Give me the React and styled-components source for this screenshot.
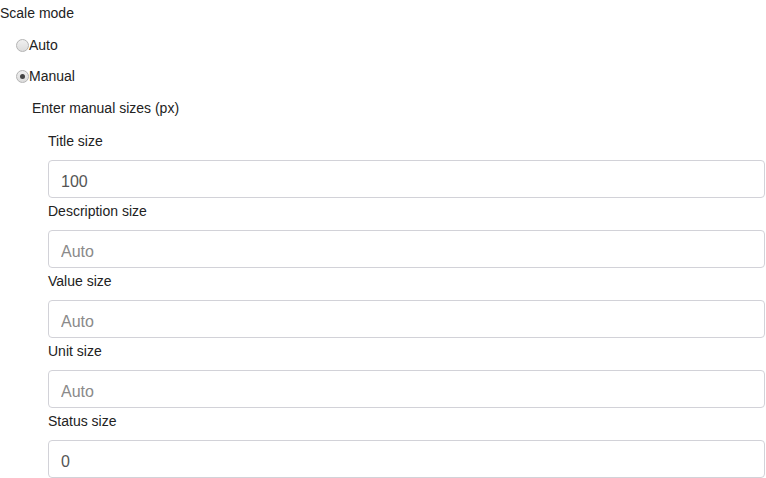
import styled, { createGlobalStyle } from "styled-components"

const fields = [
  { label: "Title size", value: "100" },
  { label: "Description size", value: "" },
  { label: "Value size", value: "" },
  { label: "Unit size", value: "" },
  { label: "Status size", value: "0" },
]

function App() {
  return (
    <>
      <GlobalStyle />
      <Page>
        <Heading>Scale mode</Heading>
        <RadioRow>
          <RadioDot />
          Auto
        </RadioRow>
        <RadioRow>
          <RadioDot checked />
          Manual
        </RadioRow>
        <SubHeading>Enter manual sizes (px)</SubHeading>
        <Fields>
          {fields.map((f) => (
            <Field key={f.label}>
              <Label>{f.label}</Label>
              <Input defaultValue={f.value} placeholder="Auto" />
            </Field>
          ))}
        </Fields>
      </Page>
    </>
  )
}

const GlobalStyle = createGlobalStyle`
  body {
    margin: 0;
    background: #fff;
    font-family: "Liberation Sans", Arial, sans-serif;
    color: #222;
  }
`

const Page = styled.div`
  display: flex;
  flex-direction: column;
  width: 766px;
  font-size: 14px;
`

const Heading = styled.div`
  line-height: 20px;
  margin: 3px 0 1px;
`

const RadioRow = styled.div`
  display: flex;
  align-items: center;
  height: 20px;
  line-height: 20px;
  margin-top: 11px;
  padding-left: 16px;
`

const RadioDot = styled.span`
  position: relative;
  box-sizing: border-box;
  width: 13px;
  height: 13px;
  border-radius: 50%;
  border: 1px solid #b4b4b4;
  background: linear-gradient(#f0f0f0, #dcdcdc);

  &::after {
    content: "";
    display: ${(p) => (p.checked ? "block" : "none")};
    position: absolute;
    left: 3px;
    top: 3px;
    width: 5px;
    height: 5px;
    border-radius: 50%;
    background: #444;
  }
`

const SubHeading = styled.div`
  line-height: 20px;
  margin-top: 12px;
  padding-left: 32px;
`

const Fields = styled.div`
  display: flex;
  flex-direction: column;
  padding: 10px 1px 0 48px;
`

const Field = styled.div`
  display: flex;
  flex-direction: column;
  margin-top: 3px;
`

const Label = styled.label`
  line-height: 20px;
  margin-bottom: 9px;
`

const Input = styled.input`
  box-sizing: border-box;
  height: 38px;
  width: 100%;
  padding: 5px 12px 0;
  border: 1px solid #d2d2d8;
  border-radius: 4px;
  font-family: "Liberation Sans", Arial, sans-serif;
  font-size: 16px;
  color: #555;
  outline: none;

  &::placeholder {
    color: #8a8a8a;
  }
`

export default App
